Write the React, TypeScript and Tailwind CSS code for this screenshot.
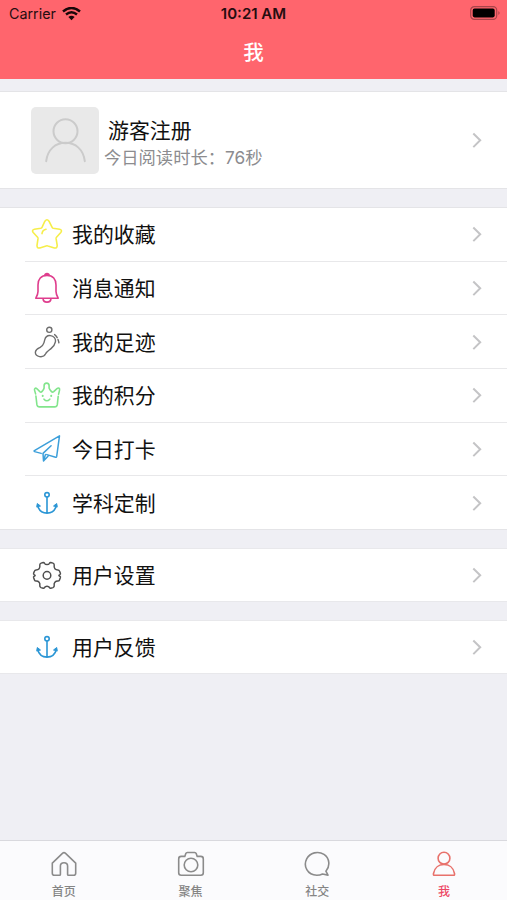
import type { ReactNode } from 'react'

const sans = "font-['Inter','Noto_Sans_CJK_SC',sans-serif]"

function Glyph({ color, width = 1.3, children }: { color: string; width?: number; children: ReactNode }) {
  return (
    <svg className="size-8 shrink-0" viewBox="0 0 32 32" fill="none" stroke={color} strokeWidth={width} strokeLinecap="round" strokeLinejoin="round">
      {children}
    </svg>
  )
}

const Star = () => (
  <Glyph color="#f6ee4a" width={1.6}>
    <path d="M13.9 3.2Q16 .4 18 3.2L21 9.2Q21.4 10 22.2 10.2L28.7 11.3Q31.6 12 29.8 14.5L25.5 19.3Q25 19.9 25.1 20.7L26.2 27.4Q26.1 30.6 23.4 29.9L16.9 27.9Q16 27.6 15.1 27.9L8.8 29.9Q6 30.6 6 27.4L7 20.7Q7.1 19.9 6.6 19.3L2.2 14.5Q.4 12 3.4 11.3L9.8 10.2Q10.7 10 11.1 9.2Z" />
    <path d="M11 15.6Q11.3 12.2 15 11.2" />
  </Glyph>
)

const Bell = () => (
  <Glyph color="#df3d8d" width={1.6}>
    <path d="M13.8 3.6C13.4 1 18.6 1 18.2 3.6M16 3.4C10 3.4 7 7.4 7 12.9V19.6C7 22.4 6.3 23.6 4.8 26.2H27.2C25.7 23.6 25 22.4 25 19.6V12.9C25 7.4 22 3.4 16 3.4ZM12 26.4C12.2 31.4 19.8 31.4 20 26.4" />
  </Glyph>
)

const Foot = () => (
  <Glyph color="#6d6d6d" width={1.4}>
    <circle cx="18.3" cy="3.8" r="2.6" />
    <path d="M13.8 13.6C14.6 10.6 16.8 9.3 19.4 9.6C22.8 10.2 24.9 12.8 24.4 15.8C23.9 18.8 22.2 20.8 20 22.6C17.6 24.5 15.6 25.6 14.6 27.8C13.4 30.2 11 31 8.6 30.6C6 30.1 4.2 28.2 4.4 26C4.7 23.6 6.9 22.6 8.9 21.6C11.2 20.4 12.4 18.6 13 16.6C13.3 15.4 13.5 14.6 13.8 13.6Z" />
    <path d="M23.6 8.6C24.8 9.4 25.6 10.4 26.2 11.6M27 13.4C27.5 14.6 27.8 15.6 27.9 16.9" />
  </Glyph>
)

const Crown = () => (
  <Glyph color="#82e58c" width={1.6}>
    <path d="M4.9 17L5.9 25.7Q6.3 27.9 8.5 27.9H23.7Q25.9 27.9 26.3 25.7L27.2 17.4M4.6 14.9L3.6 11.4C3 9.3 4.5 8.5 6 9.8L8.8 12.6Q10 13.6 11.1 12.4Q12.8 10.6 13.1 9V6.8C13.1 3.2 18.1 3.2 18.1 6.8V9Q18.5 10.6 20.3 12.4Q21.4 13.6 22.7 12.6L26 9.6C27.6 8.3 29.1 9.3 28.5 11.4L27.6 15.1" />
    <path d="M13 20.2Q15.8 23.4 18.8 20.2" />
    <path d="M11.7 16.8V17M20.2 16.8V17" strokeWidth="2" />
  </Glyph>
)

const Plane = () => (
  <Glyph color="#3c9fda" width={1.5}>
    <path d="M28.5 2.9L3.4 17.6Q2.7 18.2 3.6 18.6L10.2 20.4M28.5 2.9L25.7 23.4Q25.5 24.5 24.6 24.2L15.8 21.6M20.1 12.8L12 20.4L12.5 28L17 23.2M12.5 28L14.4 21.6" />
  </Glyph>
)

const Anchor = () => (
  <Glyph color="#2b96d5" width={1.6}>
    <circle cx="16" cy="7.8" r="2.2" />
    <path d="M16 10V26.1M6.6 18.5C8 23.8 11.6 26.1 16 26.1S24 23.8 25.4 18.5" />
    <path d="M5.8 19.7L6.3 16.5L9.2 18.8ZM26.2 19.7L25.7 16.5L22.8 18.8Z" fill="#2b96d5" strokeWidth="1" />
  </Glyph>
)

const Gear = () => (
  <Glyph color="#4f4f4f" width={1.5}>
    <path d="M10.1 4.1L12.2 3.5Q13.1 3.4 13.5 4.3Q14.3 5.6 16 5.6T18.5 4.3Q18.9 3.4 19.8 3.5L22 4.1Q23.5 4.7 23.2 6.4C22.7 9.2 24.3 10.9 26.9 10.9Q28.1 10.9 28.5 12L29.4 14.2Q29.7 15.1 28.8 15.6Q26.9 16.4 28.8 17.2Q29.7 17.7 29.4 18.6L28.5 20.9Q28.1 22 26.9 22C24.3 22 22.7 23.7 23.2 26.4Q23.5 28 22 28.6L19.8 29.2Q18.9 29.4 18.5 28.5Q17.7 27.2 16 27.2T13.5 28.5Q13.1 29.4 12.2 29.2L10 28.6Q8.5 28 8.8 26.4C9.3 23.7 7.7 22 5.1 22Q3.9 22 3.5 20.9L2.6 18.6Q2.3 17.7 3.2 17.2Q5.1 16.4 3.2 15.6Q2.3 15.1 2.6 14.2L3.5 12Q3.9 10.9 5.1 10.9C7.7 10.9 9.3 9.2 8.8 6.4Q8.5 4.7 10.1 4.1Z" />
    <circle cx="16" cy="16.4" r="3.8" />
  </Glyph>
)

function Chevron() {
  return (
    <svg className="mr-[24px] ml-auto h-4 w-[12px]" viewBox="0 0 12 16" fill="none" stroke="#c4c4c6" strokeWidth="2">
      <path d="M2.3 1.5L9.2 8.3L2.3 15.1" />
    </svg>
  )
}

function Row({ icon, label, divided = false }: { icon: ReactNode; label: string; divided?: boolean }) {
  return (
    <div className={`ml-[25px] flex flex-1 items-center pl-[6px] ${divided ? 'border-b border-[#e8e8ea]' : ''}`}>
      {icon}
      <span className="ml-[9px] pt-[2px] text-[20.9px] leading-8 text-[#111]">{label}</span>
      <Chevron />
    </div>
  )
}

function Tab({ label, active = false, children }: { label: string; active?: boolean; children: ReactNode }) {
  return (
    <div className="flex flex-1 flex-col items-center pt-[9px] pl-px">
      <svg className="size-7" viewBox="0 0 28 28" fill="none" stroke={active ? '#e8716b' : '#8b8b8b'} strokeWidth="1.6" strokeLinecap="round" strokeLinejoin="round">
        {children}
      </svg>
      <span className={`mt-[6px] text-[12px] leading-4 font-medium ${active ? 'text-[#ed4866]' : 'text-[#858585]'}`}>{label}</span>
    </div>
  )
}

const items = [
  { label: '我的收藏', icon: <Star /> },
  { label: '消息通知', icon: <Bell /> },
  { label: '我的足迹', icon: <Foot /> },
  { label: '我的积分', icon: <Crown /> },
  { label: '今日打卡', icon: <Plane /> },
  { label: '学科定制', icon: <Anchor /> },
]

export default function App() {
  return (
    <div lang="zh-CN" className={`flex h-[900px] w-[507px] flex-col overflow-hidden bg-[#efeff4] ${sans}`}>
      <header className="h-[79px] shrink-0 bg-[#ff656d]">
        <div className="grid h-[27px] grid-cols-3 items-center px-[7px] text-[#260d10]">
          <div className="flex items-center gap-[6px] pl-[2px]">
            <span className="text-[14.3px] leading-5">Carrier</span>
            <svg className="h-[14px] w-[19px]" viewBox="0 0 19 14" fill="none" stroke="#190709" strokeWidth="2.5">
              <path d="M1 4.5Q9.5-2.5 18 4.5M4 7.5Q9.5 3 15 7.5" />
              <path d="M6.4 10.1Q9.5 7.3 12.6 10.1L9.5 13.2Z" fill="#190709" stroke="none" />
            </svg>
          </div>
          <span className="text-center text-[15px] leading-5 font-semibold whitespace-nowrap">10:21 AM</span>
          <svg className="-mr-px mb-px ml-auto h-[14px] w-[31px]" viewBox="0 0 31 14">
            <rect x=".7" y=".7" width="26" height="12.6" rx="3.6" fill="none" stroke="#a8444a" strokeWidth="1.2" />
            <rect x="2.7" y="2.6" width="22" height="8.8" rx="1.8" fill="#000" />
            <path d="M28.4 5Q30.8 7 28.4 9Z" fill="#a8444a" />
          </svg>
        </div>
        <h1 className="text-center text-[20.5px] leading-[52px] font-medium text-white">我</h1>
      </header>

      <section className="mt-3 flex h-[98px] shrink-0 items-center border-y border-[#e4e4e7] bg-white pl-[31px]">
        <div className="flex h-[67px] w-[68px] items-center justify-center rounded-[5px] bg-[#e9e9e9]">
          <svg className="size-[67px]" viewBox="0 0 67 67" fill="none" stroke="#cbcbcb" strokeWidth="2" strokeLinecap="round">
            <circle cx="33.5" cy="24.3" r="12" />
            <path d="M14.2 54.2C15.5 42.5 23.5 35.8 33.5 35.8S51.5 42.5 52.8 54.2" />
          </svg>
        </div>
        <div className="ml-[5px] flex flex-col pt-[6px]">
          <span className="pl-1 text-[20.9px] leading-[29px] text-[#111]">游客注册</span>
          <span className="text-[17.3px] leading-[25px] text-[#8c8c8f]">今日阅读时长：76秒</span>
        </div>
        <Chevron />
      </section>

      <section className="mt-[18px] flex h-[323px] shrink-0 flex-col border-y border-[#e4e4e7] bg-white">
        {items.map((item, i) => (
          <Row key={item.label} icon={item.icon} label={item.label} divided={i < items.length - 1} />
        ))}
      </section>

      <section className="mt-[18px] flex h-[54px] shrink-0 border-y border-[#e8e8eb] bg-white">
        <Row icon={<Gear />} label="用户设置" />
      </section>

      <section className="mt-[18px] flex h-[54px] shrink-0 border-y border-[#e8e8eb] bg-white">
        <Row icon={<Anchor />} label="用户反馈" />
      </section>

      <nav className="mt-auto flex h-[60px] shrink-0 border-t border-[#d9d9de] bg-[#fbfbfd]">
        <Tab label="首页">
          <path d="M2.3 13.2L12.7 3.2Q14 2 15.3 3.2L25.7 13.2V23.3Q25.7 25.3 23.7 25.3H18.5Q17.6 25.3 17.6 24.4V16C17.6 11.6 10.4 11.6 10.4 16V24.4Q10.4 25.3 9.5 25.3H4.3Q2.3 25.3 2.3 23.3Z" />
        </Tab>
        <Tab label="聚焦">
          <path d="M4.2 6.4H7.8L8.8 3.6Q9.2 2.5 10.4 2.5H17.6Q18.8 2.5 19.2 3.6L20.2 6.4H23.8Q26.3 6.4 26.3 8.9V22.8Q26.3 25.3 23.8 25.3H4.2Q1.7 25.3 1.7 22.8V8.9Q1.7 6.4 4.2 6.4Z" />
          <circle cx="14" cy="15" r="6.8" />
        </Tab>
        <Tab label="社交">
          <path d="M22.9 21.2C27.5 16 26.5 8 21 4.4C15 .6 7 2.8 3.8 8.6C-.1 16 4.4 25.1 13.8 25.3Q17 25.3 19.5 24L25 25.1L22.9 21.2" />
        </Tab>
        <Tab label="我" active>
          <circle cx="14" cy="8.2" r="5.9" />
          <path d="M4.3 25.3Q3.2 25.3 3.5 23.5C4.5 17.5 9 14.5 14 14.5S23.5 17.5 24.5 23.5Q24.8 25.3 23.7 25.3Z" />
        </Tab>
      </nav>
    </div>
  )
}
